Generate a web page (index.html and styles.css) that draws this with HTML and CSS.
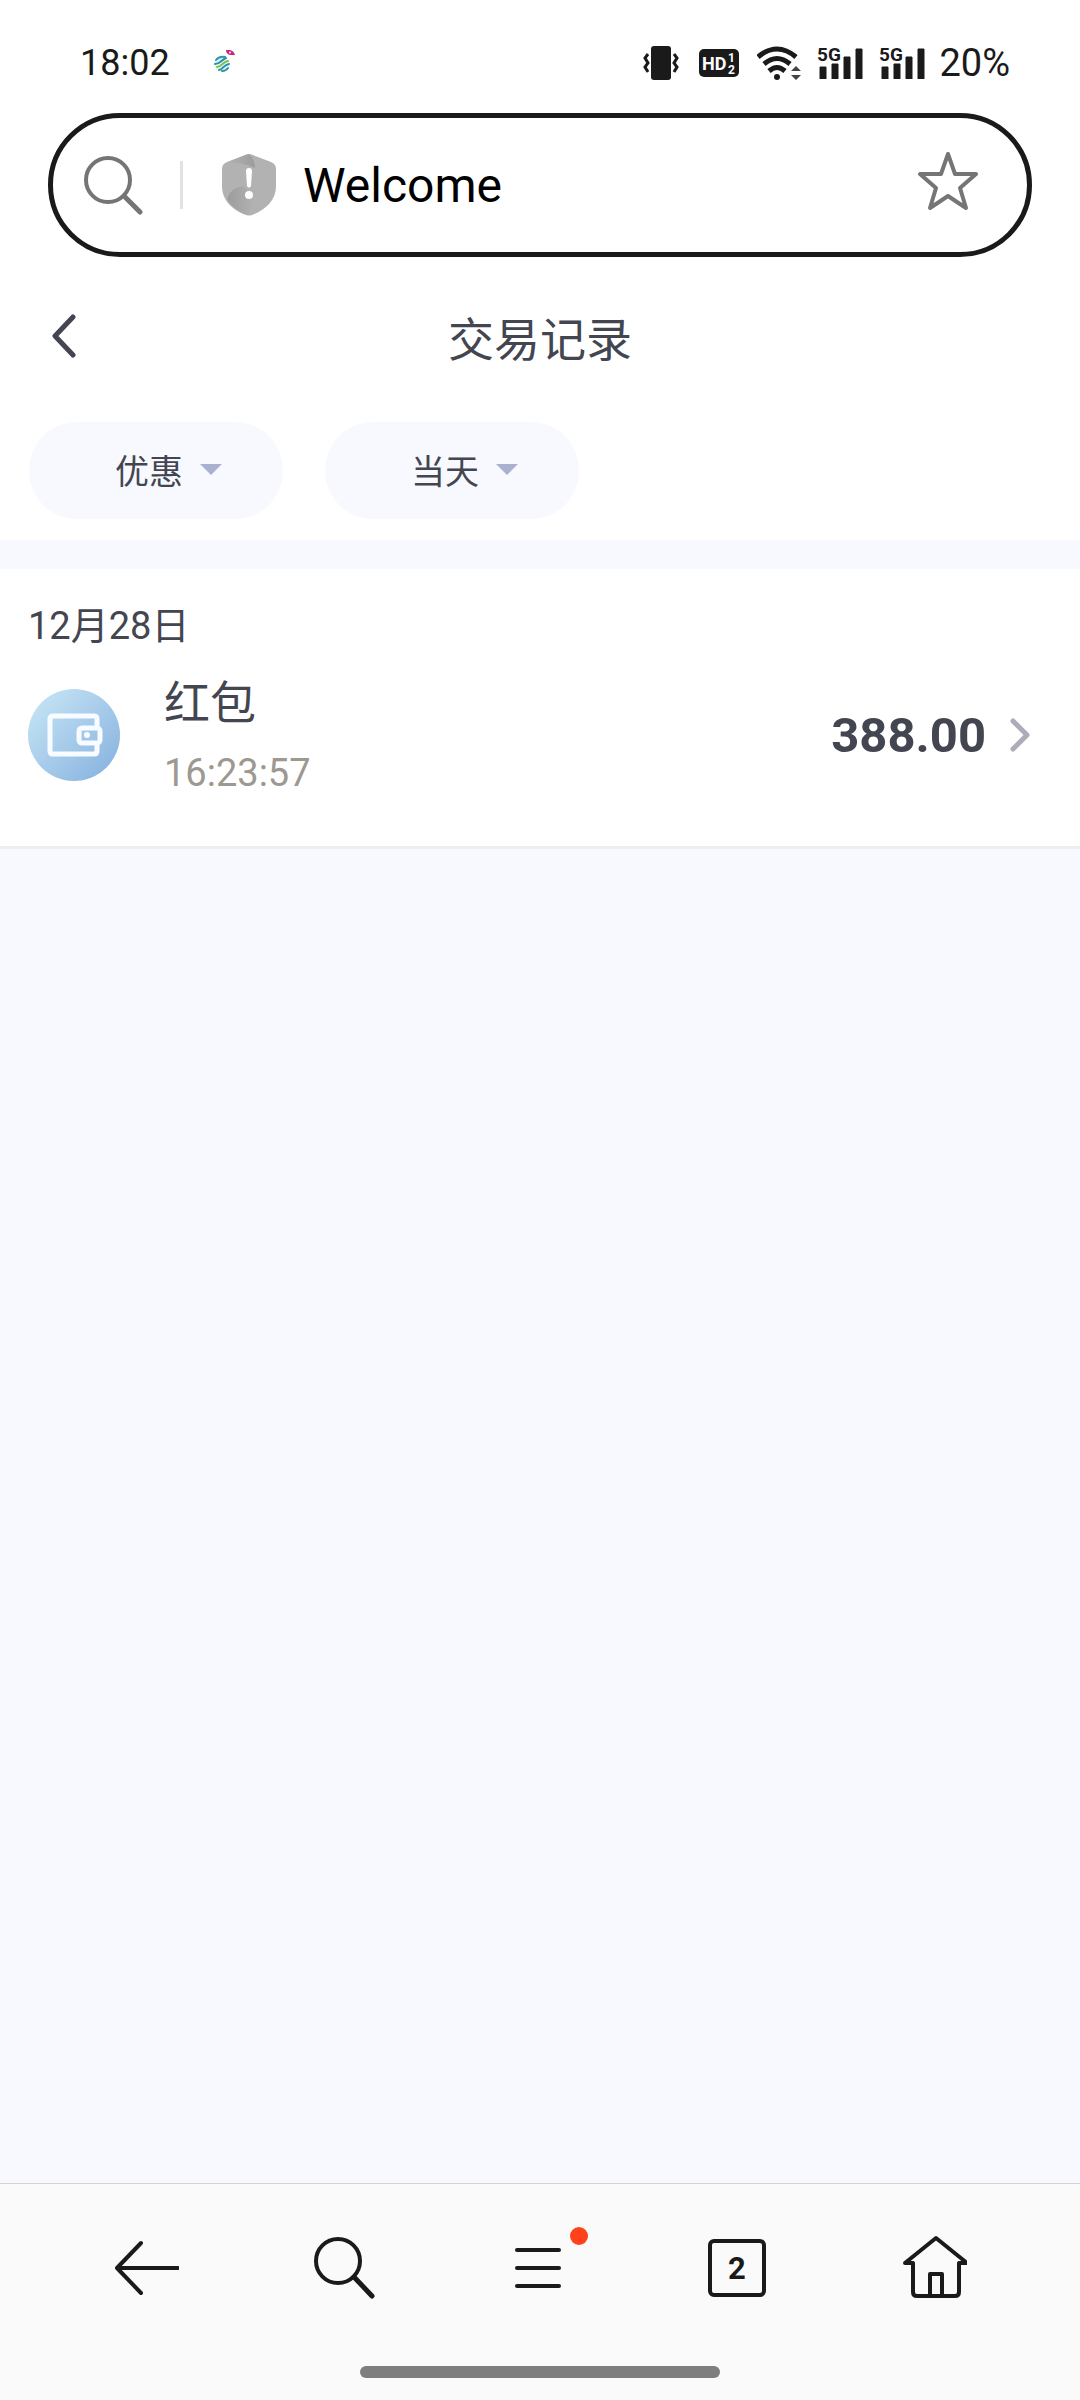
FILE: index.html
```html
<!DOCTYPE html>
<html lang="zh-CN">
<head>
  <meta charset="UTF-8">
  <meta name="viewport" content="width=device-width, initial-scale=1">
  <title>交易记录</title>
  <link rel="stylesheet" href="styles.css">
</head>
<body>
  <div class="status-bar">
    <span class="clock">18:02</span>
    <svg class="carrier" width="24" height="24" viewBox="0 0 24 24" fill="none">
      <circle cx="9" cy="15" r="8" fill="#e8f6f8"/>
      <g stroke-width="2" stroke-linecap="round">
        <path d="M3 11 Q6 7 12 8" stroke="#2b9a9a"/>
        <path d="M2 15 C7 15 8 11 13 9" stroke="#2a8fb8"/>
        <path d="M4 18 C9 18 9 13 15 12" stroke="#7cc242"/>
        <path d="M6 21 C11 20 10 16 16 15" stroke="#2a8fb8"/>
        <path d="M9 22 Q13 22 15 19" stroke="#2b9a9a"/>
      </g>
      <path d="M13 1 L17 1 Q21 2 22 6 L17 6 Q13 5 13 1Z" fill="#c9267d"/>
      <circle cx="17" cy="3.500" r="1" fill="#fff"/>
    </svg>
    <div class="status-icons">
      <svg width="36" height="34" viewBox="0 0 36 34">
        <rect x="8" y="0" width="20" height="34" rx="3" fill="#1a1a1a"/>
        <path d="M5 8 L2 12 L5 17 L2 21 L5 26 M31 8 L34 12 L31 17 L34 21 L31 26" fill="none" stroke="#1a1a1a" stroke-width="3"/>
      </svg>
      <svg class="hd" width="40" height="28" viewBox="0 0 40 28">
        <rect width="40" height="28" rx="5" fill="#1a1a1a"/>
        <text x="3" y="21" font-size="18" font-weight="700" fill="#fff">HD</text>
        <text x="29" y="13" font-size="12" font-weight="700" fill="#fff">1</text>
        <text x="29" y="25" font-size="12" font-weight="700" fill="#fff">2</text>
      </svg>
      <svg class="wifi" width="44" height="34" viewBox="0 0 44 34">
        <g fill="none" stroke="#1a1a1a" stroke-width="5">
          <path d="M1 11 Q20 -5 39 11"/>
          <path d="M7 18 Q20 7 33 18"/>
          <path d="M12 25 Q20 18 28 25"/>
        </g>
        <circle cx="20" cy="31" r="3" fill="#1a1a1a"/>
        <path d="M34 25 L39 20 L44 25Z M34 29 L39 34 L44 29Z" fill="#444"/>
      </svg>
      <svg class="signal" width="46" height="38" viewBox="0 -6 46 38">
        <text x="0" y="14" font-size="19" font-weight="700" fill="#1a1a1a">5G</text>
        <path d="M3 20h6v12h-6z M15 17h6v15h-6z M27 10h6v22h-6z M39 2h6v30h-6z" fill="#1a1a1a" stroke="#1a1a1a" stroke-linejoin="round"/>
      </svg>
      <svg class="signal" width="46" height="38" viewBox="0 -6 46 38">
        <text x="0" y="14" font-size="19" font-weight="700" fill="#1a1a1a">5G</text>
        <path d="M3 20h6v12h-6z M15 17h6v15h-6z M27 10h6v22h-6z M39 2h6v30h-6z" fill="#1a1a1a" stroke="#1a1a1a" stroke-linejoin="round"/>
      </svg>
      <span class="battery">20%</span>
    </div>
  </div>

  <form class="address-bar">
    <svg class="search-icon" width="60" height="60" viewBox="0 0 60 60" fill="none" stroke="#757575">
      <circle cx="25" cy="25" r="22" stroke-width="4"/>
      <path d="M41 41 L57 57" stroke-width="5" stroke-linecap="round"/>
    </svg>
    <span class="divider"></span>
    <svg class="shield" width="54" height="62" viewBox="0 0 54 62">
      <defs>
        <linearGradient id="shieldTop" x1="0" y1="0" x2="1" y2="0">
          <stop offset="0" stop-color="#b2b2b2"/>
          <stop offset="1" stop-color="#9c9c9c"/>
        </linearGradient>
        <linearGradient id="shieldLow" x1="0" y1="0" x2="1" y2="0">
          <stop offset="0" stop-color="#9c9c9c"/>
          <stop offset="1" stop-color="#b2b2b2"/>
        </linearGradient>
      </defs>
      <path d="M27 0 Q29 0 31 1 L49 8 Q54 10 54 15 V32 C54 48 41 57 30 61 Q27 62 24 61 C13 57 0 48 0 32 V15 Q0 10 5 8 L23 1 Q25 0 27 0Z" fill="#b2b2b2"/>
      <path d="M6 8 L27 0 Q33 5 33 14 Q22 9 6 8Z" fill="url(#shieldTop)"/>
      <path d="M5 45 Q9 33 22 32 L32 45 L26 61 Q12 57 5 45Z" fill="url(#shieldLow)"/>
      <path d="M24 17 Q24 14 27 14 Q30 14 30 17 L29 32 Q27 35 25 32Z" fill="#fff"/>
      <circle cx="27" cy="41" r="4" fill="#fff"/>
    </svg>
    <input class="address" type="text" value="Welcome" aria-label="Address">
    <button class="star" type="button" aria-label="Bookmark">
      <svg width="62" height="60" viewBox="0 0 62 60" fill="none" stroke="#757575" stroke-width="4" stroke-linejoin="round">
        <path d="M31 3 L38 23 H59 L43 37 L49 57 L31 45 L13 57 L19 37 L3 23 H24Z"/>
      </svg>
    </button>
  </form>

  <header class="title-bar">
    <button class="back" type="button" aria-label="返回">
      <svg width="24" height="44" viewBox="0 0 24 44" fill="none" stroke="#434650" stroke-width="5" stroke-linecap="round" stroke-linejoin="round">
        <path d="M21 3 L3 22 L21 41"/>
      </svg>
    </button>
    <h1>交易记录</h1>
  </header>

  <div class="filters">
    <div class="filter">
      <select aria-label="类型"><option>优惠</option></select>
      <span class="caret"></span>
    </div>
    <div class="filter">
      <select aria-label="日期"><option>当天</option></select>
      <span class="caret"></span>
    </div>
  </div>

  <main>
    <section class="records">
      <h2>12月28日</h2>
      <a class="record" href="#">
        <svg width="92" height="92" viewBox="0 0 92 92" fill="none">
          <defs>
            <linearGradient id="walletBg" x1="0" y1="0" x2="1" y2="1">
              <stop offset="0.1" stop-color="#c3e3f4"/>
              <stop offset="0.9" stop-color="#8bb5e1"/>
            </linearGradient>
          </defs>
          <circle cx="46" cy="46" r="46" fill="url(#walletBg)"/>
          <g stroke="#f8fbff" stroke-width="5">
            <path d="M69 38 V30 Q69 27 66 27 H25 Q22 27 22 30 V62 Q22 65 25 65 H66 Q69 65 69 62 V55"/>
            <rect x="51" y="39" width="21" height="15" rx="3"/>
          </g>
          <circle cx="59" cy="46" r="3" fill="#f8fbff"/>
        </svg>
        <div class="info">
          <span class="name">红包</span>
          <time>16:23:57</time>
        </div>
        <span class="amount">388.00</span>
        <svg width="20" height="34" viewBox="0 0 20 34" fill="none" stroke="#adadb9" stroke-width="5" stroke-linecap="round" stroke-linejoin="round">
          <path d="M3 3 L17 17 L3 31"/>
        </svg>
      </a>
    </section>
  </main>

  <nav class="toolbar">
    <button type="button" aria-label="Back">
      <svg width="66" height="66" viewBox="0 0 66 66">
        <path d="M65 33 H4 M28 8 L4 33 L28 58"/>
      </svg>
    </button>
    <button type="button" aria-label="Search">
      <svg width="66" height="66" viewBox="0 0 66 66">
        <circle cx="28" cy="26" r="22"/>
        <path d="M44 42 L62 61" stroke-width="5"/>
      </svg>
    </button>
    <button type="button" aria-label="Menu">
      <svg width="66" height="66" viewBox="0 0 66 66">
        <path d="M10 15 H52 M10 33 H52 M10 51 H52"/>
      </svg>
      <span class="dot"></span>
    </button>
    <button type="button" aria-label="Tabs">
      <span class="tabs">2</span>
    </button>
    <button type="button" aria-label="Home">
      <svg width="66" height="66" viewBox="0 0 66 66">
        <path d="M12 28 H4 L35 3 L66 28 H58 V57 Q58 61 54 61 H16 Q12 61 12 57Z M29 61 V39 H41 V61"/>
      </svg>
    </button>
  </nav>
  <div class="home-indicator"></div>
</body>
</html>
```
FILE: styles.css
```css
* {
  box-sizing: border-box;
}
body {
  margin: 0;
  min-height: 100vh;
  display: flex;
  flex-direction: column;
  background: #fff;
  color: #434650;
  font-family: Roboto, "Noto Sans CJK SC", sans-serif;
}
svg {
  display: block;
  flex: none;
}
button {
  padding: 0;
  border: 0;
  background: none;
  color: inherit;
  font: inherit;
}
.status-bar {
  display: flex;
  align-items: center;
  height: 113px;
  padding: 12px 70px 0 80px;
  color: #1a1a1a;
  font-size: 36px;
}
.carrier {
  margin: 0 0 4px 43px;
}
.status-icons {
  display: flex;
  align-items: center;
  gap: 16px;
  margin-left: auto;
}
.status-icons .hd {
  margin: 0 2px 0 4px;
}
.signal {
  margin-bottom: 6px;
}
.battery {
  margin-left: -2px;
  font-size: 38px;
}
.address-bar {
  display: flex;
  align-items: center;
  height: 144px;
  margin: 0 48px;
  padding: 0 48px 0 30px;
  border: 5px solid #1a1a1a;
  border-radius: 72px;
}
.divider {
  width: 3px;
  height: 48px;
  margin: 0 39px 0 37px;
  background: #e2e2e2;
}
.address {
  flex: 1;
  min-width: 0;
  margin-left: 27px;
  padding: 0;
  border: 0;
  background: none;
  color: #000;
  font: 48px Roboto, sans-serif;
}
.star {
  padding-bottom: 8px;
}
.title-bar {
  display: grid;
  grid-template-columns: 100px 1fr 100px;
  align-items: center;
  height: 165px;
  padding-bottom: 7px;
}
.back {
  display: flex;
  justify-content: center;
  padding-left: 27px;
}
h1 {
  margin: 0;
  text-align: center;
  font-size: 46px;
  font-weight: 400;
}
.filters {
  display: flex;
  gap: 42px;
  padding: 0 29px 21px;
}
.filter {
  position: relative;
  width: 254px;
}
.filter select {
  width: 100%;
  height: 97px;
  padding: 0 0 2px 86px;
  border: 0;
  border-radius: 48px;
  appearance: none;
  background: #f8f9ff;
  color: #434650;
  font: 34px "Noto Sans CJK SC", sans-serif;
}
.caret {
  position: absolute;
  top: 42px;
  left: 171px;
  border: 11px solid transparent;
  border-top-color: #a9b1cf;
  border-bottom: 0;
  pointer-events: none;
}
main {
  flex: 1;
  padding-top: 29px;
  background: #f8f9ff;
}
.records {
  padding: 28px 50px 41px 28px;
  border-bottom: 3px solid #edefee;
  background: #fff;
}
h2 {
  margin: 0;
  font-size: 38px;
  font-weight: 400;
  line-height: 58px;
}
.record {
  display: flex;
  align-items: center;
  margin-top: 10px;
  color: inherit;
  text-decoration: none;
}
.info {
  display: flex;
  flex-direction: column;
  flex: 1;
  margin-left: 44px;
}
.name {
  font-size: 46px;
  line-height: 76px;
}
time {
  color: #9d9890;
  font-size: 38px;
  line-height: 64px;
}
.amount {
  margin-right: 24px;
  font-size: 49px;
  font-weight: 700;
}
.toolbar {
  display: flex;
  padding: 51px 48px 0;
  height: 183px;
  border-top: 1px solid #d4d4d8;
  background: #fafafa;
  color: #1a1a1a;
}
.toolbar button {
  position: relative;
  display: flex;
  flex: 1;
  align-items: center;
  justify-content: center;
  height: 66px;
}
.toolbar svg {
  fill: none;
  stroke: #1a1a1a;
  stroke-width: 4;
  stroke-linecap: round;
  stroke-linejoin: round;
}
.dot {
  position: absolute;
  top: -8px;
  left: 50%;
  width: 18px;
  height: 18px;
  margin-left: 30px;
  border-radius: 50%;
  background: #ff421c;
}
.tabs {
  width: 58px;
  height: 58px;
  border: 4px solid #1a1a1a;
  border-radius: 6px;
  text-align: center;
  font-size: 31px;
  font-weight: 700;
  line-height: 52px;
}
.home-indicator {
  height: 34px;
  background: #fafafa;
}
.home-indicator::before {
  content: "";
  display: block;
  width: 33.333%;
  height: 12px;
  margin: 0 auto;
  border-radius: 6px;
  background: #7e7e7e;
}
```
